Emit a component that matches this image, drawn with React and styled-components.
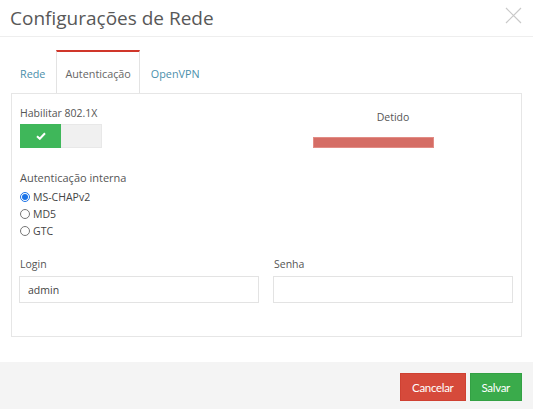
import React from "react";
import styled, { createGlobalStyle } from "styled-components";

const GlobalStyle = createGlobalStyle`
  html, body { margin: 0; padding: 0; background: #fff; }
  body { font-family: "Open Sans", "Noto Sans", sans-serif; color: #555; }
  * { box-sizing: border-box; }
`;

const Modal = styled.div`
  width: 533px;
  height: 409px;
  display: flex;
  flex-direction: column;
  background: #fff;
  overflow: hidden;
`;

const Header = styled.div`
  height: 37px;
  border-bottom: 1px solid #eee;
  display: flex;
  align-items: center;
  justify-content: space-between;
  padding: 0 11px 0 10px;
`;

const Title = styled.h1`
  margin: 0;
  font-size: 19px;
  font-weight: 400;
  color: #585858;
  letter-spacing: 0;
`;

const Close = styled.button`
  border: 0;
  background: none;
  padding: 0;
  width: 17px;
  height: 17px;
  margin-top: -6px;
  display: flex;
  cursor: pointer;
`;

const Body = styled.div`
  padding: 13px 11px 0 11px;
`;

const Tabs = styled.div`
  display: flex;
  height: 43px;
  position: relative;
  z-index: 1;
`;

const Tab = styled.div`
  height: 43px;
  padding: 2px 8px 0;
  margin-right: 2px;
  display: flex;
  align-items: center;
  font-size: 10.8px;
  color: ${(p) => (p.$active ? "#666" : "#4b8fab")};
  background: ${(p) => (p.$active ? "#fff" : "transparent")};
  border-top: 2px solid ${(p) => (p.$active ? "#d0362a" : "transparent")};
  border-left: 1px solid ${(p) => (p.$active ? "#e3e3e3" : "transparent")};
  border-right: 1px solid ${(p) => (p.$active ? "#e3e3e3" : "transparent")};
`;

const Panel = styled.div`
  border: 1px solid #e6e6e6;
  height: 244px;
  padding: 12px 9px 0 7px;
`;

const TopGrid = styled.div`
  display: grid;
  grid-template-columns: 240px 240px;
  column-gap: 14px;
`;

const Column = styled.div`
  display: flex;
  flex-direction: column;
`;

const Label = styled.div`
  font-size: 10.5px;
  line-height: 15px;
  color: #555;
  padding-left: 1px;
`;

const Toggle = styled.div`
  margin-top: 3px;
  margin-left: 1px;
  width: 82px;
  height: 24px;
  display: flex;
  background: #f0f0f0;
  border: 1px solid #e8e8e8;
`;

const ToggleOn = styled.div`
  width: 41px;
  height: 24px;
  margin: -1px 0 0 -1px;
  background: #3fb75a;
  display: flex;
  align-items: center;
  justify-content: center;
`;

const SectionLabel = styled(Label)`
  margin-top: 22px;
  font-size: 11px;
`;

const RadioList = styled.div`
  margin-top: 3px;
  display: flex;
  flex-direction: column;
`;

const RadioRow = styled.label`
  height: 17px;
  display: flex;
  align-items: center;
  font-size: 10.5px;
  color: #444;
  gap: 3px;
  padding-left: 1px;
`;

const Radio = styled.span`
  width: 10px;
  height: 10px;
  border-radius: 50%;
  border: 1px solid ${(p) => (p.$checked ? "#1a73e8" : "#767676")};
  background: #fff;
  display: flex;
  align-items: center;
  justify-content: center;
  &::after {
    content: "";
    width: 6px;
    height: 6px;
    border-radius: 50%;
    background: ${(p) => (p.$checked ? "#1a73e8" : "transparent")};
  }
`;

const StatusColumn = styled.div`
  display: flex;
  flex-direction: column;
  padding-top: 4px;
`;

const StatusText = styled.div`
  text-align: center;
  font-size: 10.5px;
  line-height: 15px;
  color: #555;
`;

const StatusBar = styled.div`
  margin-top: 12px;
  margin-left: 40px;
  width: 121px;
  height: 11px;
  background: #d56d65;
  border: 1px solid #e28c85;
`;

const FieldGrid = styled.div`
  margin-top: 18px;
  display: grid;
  grid-template-columns: 240px 240px;
  column-gap: 14px;
`;

const Field = styled.div`
  display: flex;
  flex-direction: column;
`;

const Input = styled.input`
  margin-top: 4px;
  height: 27px;
  border: 1px solid #e3e3e3;
  padding: 0 8px;
  font-family: "Open Sans", sans-serif;
  font-size: 10.5px;
  color: #444;
  outline: none;
  width: 100%;
`;

const Footer = styled.div`
  margin-top: auto;
  height: 47px;
  background: #f4f4f4;
  display: flex;
  justify-content: flex-end;
  align-items: flex-start;
  padding: 11px 11px 0 0;
  gap: 4px;
`;

const Button = styled.button`
  height: 28px;
  padding: 0 11px;
  border: 1px solid ${(p) => p.$border};
  background: ${(p) => p.$bg};
  color: #fff;
  font-family: "Lato", "Open Sans", sans-serif;
  font-size: 11.5px;
  letter-spacing: -0.3px;
  cursor: pointer;
`;

export default function App() {
  return (
    <>
      <GlobalStyle />
      <Modal>
        <Header>
          <Title>Configurações de Rede</Title>
          <Close aria-label="Fechar">
            <svg width="17" height="17" viewBox="0 0 17 17">
              <path d="M1 1 L16 16 M16 1 L1 16" stroke="#c9c9c9" strokeWidth="1.2" fill="none" />
            </svg>
          </Close>
        </Header>
        <Body>
          <Tabs>
            <Tab>Rede</Tab>
            <Tab $active>Autenticação</Tab>
            <Tab>OpenVPN</Tab>
          </Tabs>
          <Panel>
            <TopGrid>
              <Column>
                <Label>Habilitar 802.1X</Label>
                <Toggle>
                  <ToggleOn>
                    <svg width="10" height="8" viewBox="0 0 10 8">
                      <path d="M1 4.2 L3.8 6.8 L9 1.2" stroke="#fff" strokeWidth="2" fill="none" />
                    </svg>
                  </ToggleOn>
                </Toggle>
                <SectionLabel>Autenticação interna</SectionLabel>
                <RadioList>
                  <RadioRow><Radio $checked />MS-CHAPv2</RadioRow>
                  <RadioRow><Radio />MD5</RadioRow>
                  <RadioRow><Radio />GTC</RadioRow>
                </RadioList>
              </Column>
              <StatusColumn>
                <StatusText>Detido</StatusText>
                <StatusBar />
              </StatusColumn>
            </TopGrid>
            <FieldGrid>
              <Field>
                <Label>Login</Label>
                <Input defaultValue="admin" />
              </Field>
              <Field>
                <Label>Senha</Label>
                <Input type="password" />
              </Field>
            </FieldGrid>
          </Panel>
        </Body>
        <Footer>
          <Button $bg="#d64a3b" $border="#cf4132">Cancelar</Button>
          <Button $bg="#3aab4b" $border="#33a144">Salvar</Button>
        </Footer>
      </Modal>
    </>
  );
}
